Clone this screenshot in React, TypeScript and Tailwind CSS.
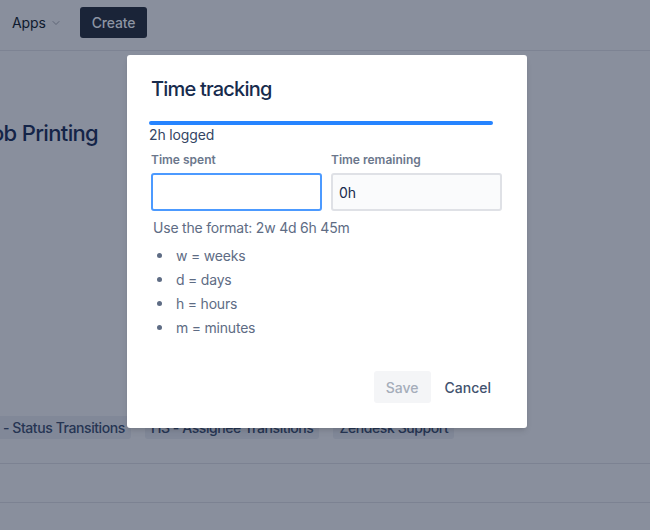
import { ChevronDown } from "lucide-react";

const FONT = { fontFamily: "Inter, 'Noto Sans', 'Liberation Sans', sans-serif" };

const UNITS = ["w = weeks", "d = days", "h = hours", "m = minutes"];
const TAGS = ["HS - Status Transitions", "HS - Assignee Transitions", "Zendesk Support"];

function BackgroundPage() {
  return (
    <div className="w-full h-full bg-[#898f9d] overflow-hidden">
      {/* Top bar */}
      <div className="h-[51px] flex items-start gap-[18px] px-3 pt-[7px] border-b border-[#7d8393]">
        <div className="h-[31px] flex items-center gap-1 text-[14px] text-[#0f1a2e] tracking-[-0.01em]">
          Apps
          <ChevronDown className="w-3 h-3 text-[#5f6677]" strokeWidth={2} />
        </div>
        <button className="h-[31px] px-3 rounded-[3px] bg-[#1a2438] text-[14px] font-medium text-[#8d94a3] tracking-[-0.01em]">
          Create
        </button>
      </div>

      {/* Issue title */}
      <div className="pt-[66px] ml-[-21px] text-[22px] font-medium text-[#142448] whitespace-nowrap tracking-[-0.03em]">
        Job Printing
      </div>

      {/* Labels */}
      <div className="mt-[266px] ml-[-25px] flex gap-[14px] whitespace-nowrap">
        {TAGS.map((t) => (
          <span
            key={t}
            className="h-[23px] px-[6px] rounded-[3px] bg-[#818898] text-[14px] font-medium text-[#263553] leading-[23px] tracking-[-0.03em]"
          >
            {t}
          </span>
        ))}
      </div>

      <div className="mt-[24px] border-t border-[#7c8292]" />
      <div className="mt-[38px] border-t border-[#7c8292]" />
    </div>
  );
}

function TimeTrackingDialog() {
  return (
    <div className="absolute left-[127px] top-[55px] w-[400px] h-[373px] bg-white rounded-[3px] shadow-md px-6 pt-[22px]">
      <h2 className="text-[20px] font-medium text-[#172b4d] leading-6 tracking-[-0.04em]">Time tracking</h2>

      <div className="mt-[20px] ml-[-2px] w-[344px] h-[4px] rounded-full bg-[#2684ff]" />
      <p className="ml-[-2px] text-[14px] text-[#344563] leading-5 tracking-[-0.01em]">2h logged</p>

      <div className="mt-[7px] grid grid-cols-2 gap-[9px] w-[351px]">
        <label className="flex flex-col">
          <span className="text-[12px] font-semibold text-[#6b778c] leading-4 mb-[5px]">Time spent</span>
          <input className="h-[38px] rounded-[3px] border-2 border-[#4c9aff] bg-white px-[6px] text-[14px] outline-none" />
        </label>
        <label className="flex flex-col">
          <span className="text-[12px] font-semibold text-[#6b778c] leading-4 mb-[5px]">Time remaining</span>
          <input
            defaultValue="0h"
            className="h-[38px] rounded-[3px] border-2 border-[#dfe1e6] bg-[#fafbfc] px-[6px] text-[14px] text-[#172b4d] outline-none"
          />
        </label>
      </div>

      <p className="mt-[7px] ml-[2px] text-[14px] text-[#5e6c84] leading-5 tracking-[-0.015em]">
        Use the format: 2w 4d 6h 45m
      </p>
      <ul className="mt-[5px] ml-[2px]">
        {UNITS.map((u) => (
          <li key={u} className="flex items-center h-6 text-[14px] text-[#5e6c84] tracking-[-0.015em]">
            <span className="w-[5px] h-[5px] rounded-full bg-[#5e6c84] ml-[4px] mr-[14px]" />
            {u}
          </li>
        ))}
      </ul>

      <div className="absolute right-[24px] bottom-[25px] flex items-center gap-[2px]">
        <button className="h-[32px] px-3 rounded-[3px] bg-[#f4f5f7] text-[14px] font-medium text-[#a5adba]">
          Save
        </button>
        <button className="h-[32px] px-3 rounded-[3px] text-[14px] font-medium text-[#42526e]">
          Cancel
        </button>
      </div>
    </div>
  );
}

export default function App() {
  return (
    <div className="relative w-[650px] h-[530px] overflow-hidden" style={FONT}>
      <BackgroundPage />
      <TimeTrackingDialog />
    </div>
  );
}
